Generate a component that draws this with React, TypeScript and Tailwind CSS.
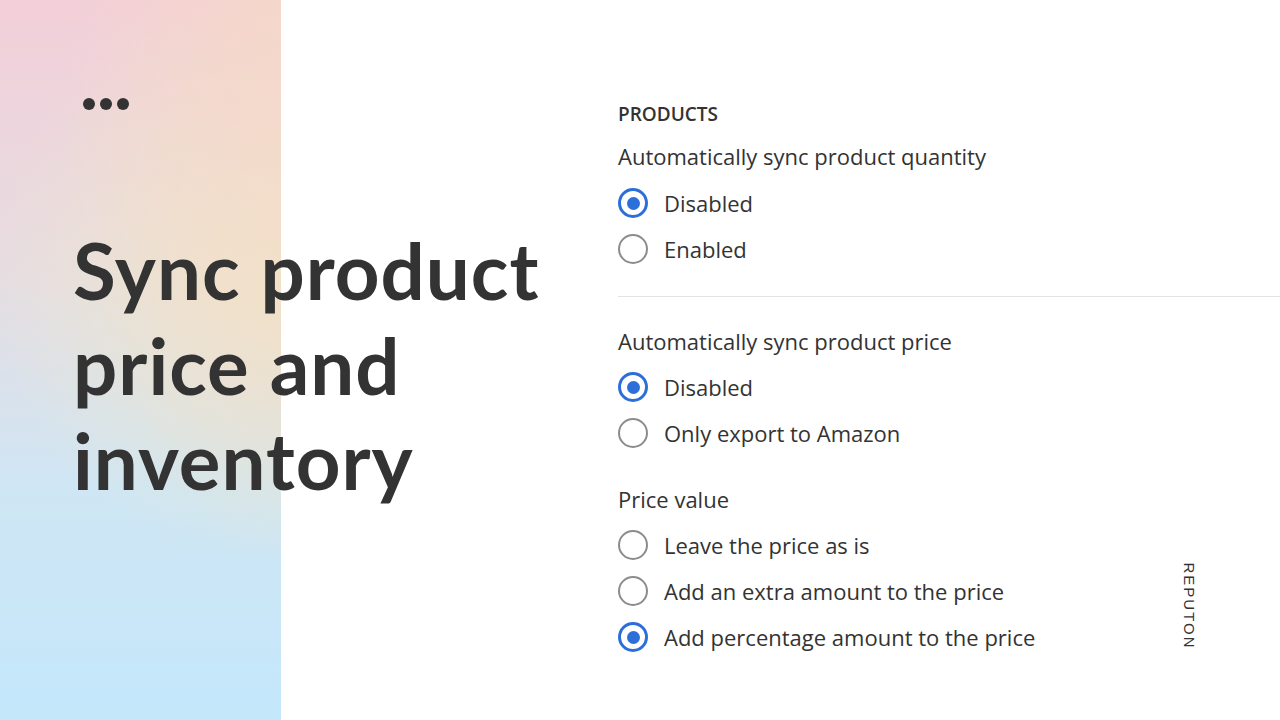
import React from 'react';

type Option = { label: string; checked?: boolean };

function Radio({ checked }: { checked?: boolean }) {
  if (checked) {
    return (
      <span className="flex h-[30px] w-[30px] shrink-0 items-center justify-center rounded-full border-[3px] border-[#2c6fd9]">
        <span className="h-[13px] w-[13px] rounded-full bg-[#2c6fd9]" />
      </span>
    );
  }
  return <span className="h-[30px] w-[30px] shrink-0 rounded-full border-[2.5px] border-[#8c8c8c]" />;
}

function RadioGroup({
  title,
  options,
  className = '',
  listClass = 'mt-[15px]',
}: {
  title: string;
  options: Option[];
  className?: string;
  listClass?: string;
}) {
  return (
    <div className={className}>
      <p className="h-[30px] text-[22px] leading-[30px] text-[#333]">{title}</p>
      <div className={`flex flex-col gap-[16px] ${listClass}`}>
        {options.map((o) => (
          <label key={o.label} className="flex h-[30px] items-center gap-[16px]">
            <Radio checked={o.checked} />
            <span className="text-[22px] leading-[30px] text-[#333]">{o.label}</span>
          </label>
        ))}
      </div>
    </div>
  );
}

export default function App() {
  return (
    <div className="flex h-[720px] w-[1280px] overflow-hidden bg-white" style={{ fontFamily: '"Open Sans", sans-serif' }}>
      <div className="h-full w-[281px] shrink-0 bg-[radial-gradient(ellipse_at_100%_0%,rgba(246,216,200,0.85),rgba(246,216,200,0)_55%),radial-gradient(circle_at_100%_38%,rgba(240,232,198,0.9),rgba(240,232,198,0)_55%),linear-gradient(180deg,#f2cfd9_0%,#e6dde2_38%,#cfe6f4_68%,#c4e7fb_100%)]" />

      <div className="relative -ml-[281px] flex w-[560px] flex-col pl-[73px] pt-[98px]">
        <div className="flex gap-[5px] pl-[10px]">
          <span className="h-[12px] w-[12px] rounded-full bg-[#333]" />
          <span className="h-[12px] w-[12px] rounded-full bg-[#333]" />
          <span className="h-[12px] w-[12px] rounded-full bg-[#333]" />
        </div>
        <h1
          className="mt-[113px] text-[78px] font-bold leading-[95px] tracking-[1px] text-[#333]"
          style={{ fontFamily: 'Lato, sans-serif' }}
        >
          Sync product
          <br />
          price and
          <br />
          inventory
        </h1>
      </div>

      <div className="relative flex flex-1 flex-col pl-[58px] pt-[101px]">
        <p className="text-[19px] font-semibold leading-[26px] text-[#333]">PRODUCTS</p>
        <RadioGroup
          className="mt-[14px]"
          listClass="mt-[17px]"
          title="Automatically sync product quantity"
          options={[{ label: 'Disabled', checked: true }, { label: 'Enabled' }]}
        />
        <div className="mt-[32px] h-px bg-[#e3e3e3]" />
        <RadioGroup
          className="mt-[29px]"
          listClass="mt-[16px]"
          title="Automatically sync product price"
          options={[{ label: 'Disabled', checked: true }, { label: 'Only export to Amazon' }]}
        />
        <RadioGroup
          className="mt-[36px]"
          listClass="mt-[16px]"
          title="Price value"
          options={[
            { label: 'Leave the price as is' },
            { label: 'Add an extra amount to the price' },
            { label: 'Add percentage amount to the price', checked: true },
          ]}
        />
        <span
          className="absolute left-[629px] top-[606px] -translate-x-1/2 -translate-y-1/2 rotate-90 text-[15px] tracking-[2px] text-[#333]"
          style={{ fontFamily: '"Liberation Sans", sans-serif' }}
        >
          REPUTON
        </span>
      </div>
    </div>
  );
}
